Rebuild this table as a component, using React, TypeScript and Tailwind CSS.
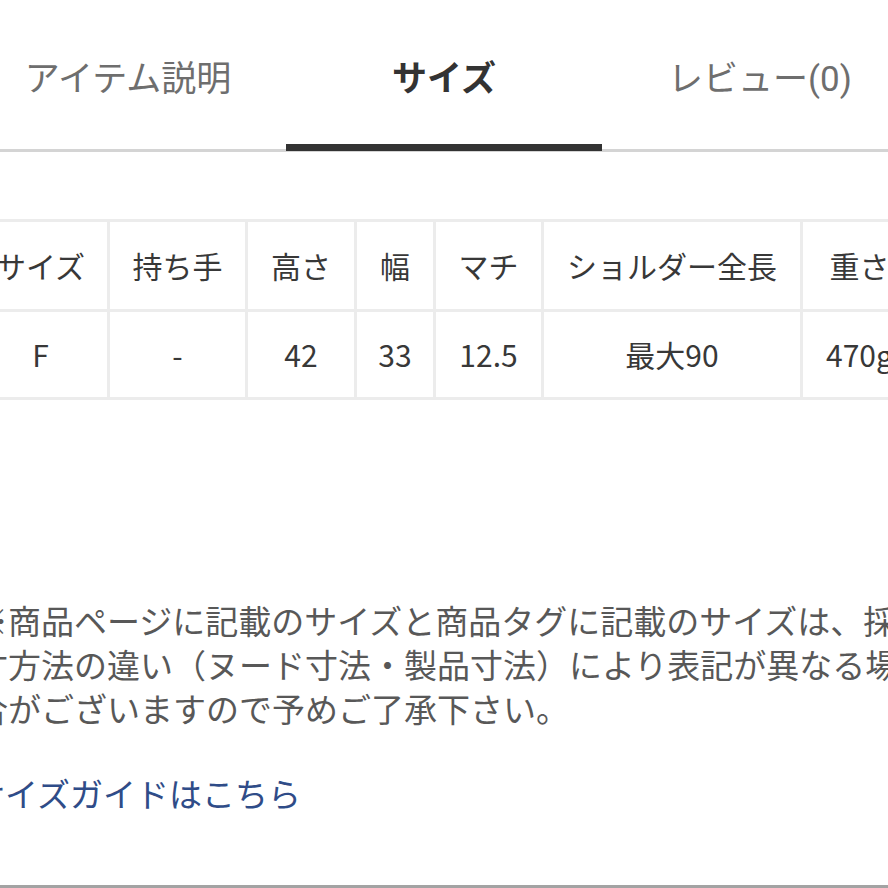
import React from 'react';

const tabs = [
  { label: 'アイテム説明', active: false },
  { label: 'サイズ', active: true },
  { label: 'レビュー(0)', active: false },
];

const columns = [
  { head: 'サイズ', value: 'F', width: 'w-[136px]' },
  { head: '持ち手', value: '-', width: 'w-[138px]' },
  { head: '高さ', value: '42', width: 'w-[109px]' },
  { head: '幅', value: '33', width: 'w-[79px]' },
  { head: 'マチ', value: '12.5', width: 'w-[108px]' },
  { head: 'ショルダー全長', value: '最大90', width: 'w-[259px]' },
  { head: '重さ', value: '470g', width: 'w-[116px]' },
];

export default function App() {
  return (
    <div className="w-[888px] h-[888px] overflow-hidden bg-white flex flex-col font-['Noto_Sans_CJK_JP',sans-serif]">
      {/* tabs */}
      <div className="flex shrink-0 -ml-[30px] w-[948px] h-[152px] border-b-[3px] border-[#d4d4d4]">
        {tabs.map(tab => (
          <div key={tab.label} className="w-[316px] flex flex-col">
            <div
              className={`flex-1 flex justify-center pt-[59px] text-[35px] leading-[42px] font-['Roboto','Noto_Sans_CJK_JP',sans-serif] ${
                tab.active ? 'font-bold text-[#333333]' : 'text-[#6e6e6e]'
              }`}
            >
              {tab.label}
            </div>
            <div className={`h-[7px] -mb-[2px] ${tab.active ? 'bg-[#333333]' : 'bg-transparent'}`} />
          </div>
        ))}
      </div>

      {/* size table */}
      <div className="shrink-0 mt-[67px] -ml-[29px]">
        <div className="flex border-t-[3px] border-l-[3px] border-[#ececec] w-max text-[30px] text-[#383838]">
          {columns.map(col => (
            <div key={col.head} className={`${col.width} shrink-0 flex flex-col`}>
              <div className="h-[90px] flex items-center justify-center whitespace-nowrap border-r-[3px] border-b-[3px] border-[#ececec]">
                {col.head}
              </div>
              <div className="h-[88px] flex items-center justify-center whitespace-nowrap border-r-[3px] border-b-[3px] border-[#ececec]">
                {col.value}
              </div>
            </div>
          ))}
        </div>
      </div>

      {/* note */}
      <p className="shrink-0 mt-[198px] -ml-[25px] text-[33px] leading-[44px] text-[#585858] whitespace-nowrap">
        ※商品ページに記載のサイズと商品タグに記載のサイズは、採
        <br />
        寸方法の違い（ヌード寸法・製品寸法）により表記が異なる場
        <br />
        合がございますので予めご了承下さい。
      </p>

      <a className="shrink-0 mt-[41px] -ml-[28px] text-[33px] leading-[44px] text-[#2f4c88] whitespace-nowrap">
        サイズガイドはこちら
      </a>

      <div className="mt-auto h-[3px] shrink-0 bg-[#a3a3a3]" />
    </div>
  );
}
